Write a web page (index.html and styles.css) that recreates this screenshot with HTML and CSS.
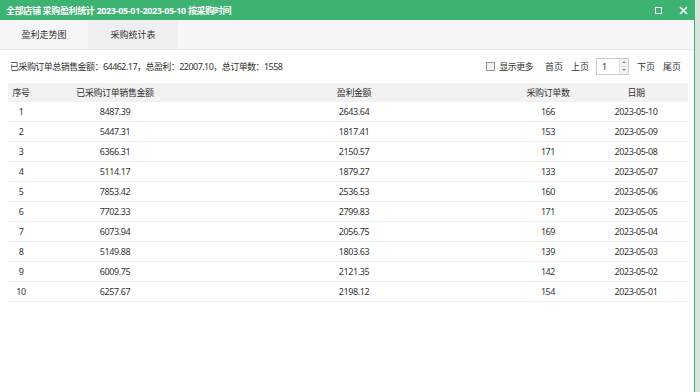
FILE: index.html
```
<!DOCTYPE html>
<html>
<head>
    <title>采购盈利统计</title>
    <link rel="stylesheet" href="styles.css">
</head>
<body>
    <div class="window">
        <div class="title-bar">
            <span class="title">全部店铺 采购盈利统计 2023-05-01-2023-05-10 按采购时间</span>
            <div class="title-btns">
                <span class="btn-max"></span>
                <svg class="btn-close" width="9" height="9" viewBox="0 0 9 9">
                    <path d="M1 1L8 8M8 1L1 8" stroke="#fff" stroke-width="1.6"/>
                </svg>
            </div>
        </div>
        <div class="tabs">
            <div class="tab">盈利走势图</div>
            <div class="tab active">采购统计表</div>
        </div>
        <div class="toolbar">
            <div class="summary">已采购订单总销售金额：64462.17，总盈利：22007.10，总订单数：1558</div>
            <div class="pager">
                <label class="more"><span class="checkbox"></span>显示更多</label>
                <span class="link">首页</span>
                <span class="link">上页</span>
                <div class="page-input">
                    <span class="page-num">1</span>
                    <div class="spinner">
                        <span class="up"></span>
                        <span class="down"></span>
                    </div>
                </div>
                <span class="link">下页</span>
                <span class="link last">尾页</span>
            </div>
        </div>
        <table class="stats">
            <thead>
                <tr><th class="c1">序号</th><th class="c2">已采购订单销售金额</th><th class="c3">盈利金额</th><th class="c4">采购订单数</th><th class="c5">日期</th></tr>
            </thead>
            <tbody>
                <tr><td>1</td><td>8487.39</td><td>2643.64</td><td>166</td><td>2023-05-10</td></tr>
                <tr><td>2</td><td>5447.31</td><td>1817.41</td><td>153</td><td>2023-05-09</td></tr>
                <tr><td>3</td><td>6366.31</td><td>2150.57</td><td>171</td><td>2023-05-08</td></tr>
                <tr><td>4</td><td>5114.17</td><td>1879.27</td><td>133</td><td>2023-05-07</td></tr>
                <tr><td>5</td><td>7853.42</td><td>2536.53</td><td>160</td><td>2023-05-06</td></tr>
                <tr><td>6</td><td>7702.33</td><td>2799.83</td><td>171</td><td>2023-05-05</td></tr>
                <tr><td>7</td><td>6073.94</td><td>2056.75</td><td>169</td><td>2023-05-04</td></tr>
                <tr><td>8</td><td>5149.88</td><td>1803.63</td><td>139</td><td>2023-05-03</td></tr>
                <tr><td>9</td><td>6009.75</td><td>2121.35</td><td>142</td><td>2023-05-02</td></tr>
                <tr><td>10</td><td>6257.67</td><td>2198.12</td><td>154</td><td>2023-05-01</td></tr>
            </tbody>
        </table>
    </div>
</body>
</html>
```

FILE: styles.css
```
body {
    margin: 0;
    padding: 0;
    background-color: #d9e6e0;
    font-family: "Noto Sans", "Noto Sans CJK SC", sans-serif;
    font-size: 9px;
    color: #333;
}

.window {
    width: 694px;
    height: 392px;
    background-color: #fff;
    border-right: 1px solid #3cb371;
}

.title-bar {
    display: flex;
    align-items: center;
    justify-content: space-between;
    height: 20px;
    background-color: #3db371;
    color: #fff;
    padding: 0 6px 0 6px;
}

.title {
    font-size: 9px;
    font-weight: bold;
    letter-spacing: -0.35px;
}

.title-btns {
    display: flex;
    align-items: center;
    gap: 17px;
}

.btn-max {
    width: 5px;
    height: 5px;
    border: 1.5px solid #fff;
}

.btn-close {
    display: block;
}

.tabs {
    display: flex;
    height: 29px;
    background-color: #f7f7f7;
    border-bottom: 1px solid #e8e8e8;
}

.tab {
    width: 88px;
    line-height: 29px;
    text-align: center;
    color: #333;
}

.tab.active {
    width: 90px;
    background-color: #efefef;
}

.toolbar {
    display: flex;
    align-items: center;
    justify-content: space-between;
    height: 33px;
    padding: 0 13px 0 10px;
    letter-spacing: -0.55px;
}

.pager {
    display: flex;
    align-items: center;
    letter-spacing: 0;
}

.more {
    display: flex;
    align-items: center;
    margin-right: 12px;
    letter-spacing: -0.6px;
}

.checkbox {
    width: 7px;
    height: 7px;
    border: 1px solid #999;
    background-color: #f2f2f2;
    margin-right: 4px;
}

.link {
    margin-right: 8px;
}

.link.last {
    margin-right: 0;
}

.page-input {
    display: flex;
    align-items: center;
    justify-content: space-between;
    width: 26px;
    height: 15px;
    border: 1px solid #ccc;
    margin: 0 8px 0 -1px;
    padding-left: 5px;
}

.spinner {
    display: flex;
    flex-direction: column;
    width: 8px;
    height: 15px;
    border-left: 1px solid #e2e2e2;
}

.spinner span {
    flex: 1;
    position: relative;
    background-color: #f4f4f4;
}

.spinner .up {
    border-bottom: 1px solid #e2e2e2;
}

.spinner .up::after,
.spinner .down::after {
    content: "";
    position: absolute;
    left: 2px;
    top: 2px;
    border-left: 2px solid transparent;
    border-right: 2px solid transparent;
}

.spinner .up::after {
    border-bottom: 2px solid #888;
}

.spinner .down::after {
    border-top: 2px solid #888;
}

.stats {
    width: 680px;
    margin-left: 8px;
    border-collapse: collapse;
    table-layout: fixed;
    letter-spacing: -0.4px;
}

.stats th {
    height: 19px;
    font-weight: normal;
    background-color: #f2f2f2;
    text-align: center;
    padding: 0;
}

.stats td {
    height: 19px;
    text-align: center;
    padding: 0;
    border-bottom: 1px solid #ececec;
}

.c1 { width: 26px; }
.c2 { width: 162px; }
.c3 { width: 316px; }
.c4 { width: 72px; }
.c5 { width: 104px; }
```
